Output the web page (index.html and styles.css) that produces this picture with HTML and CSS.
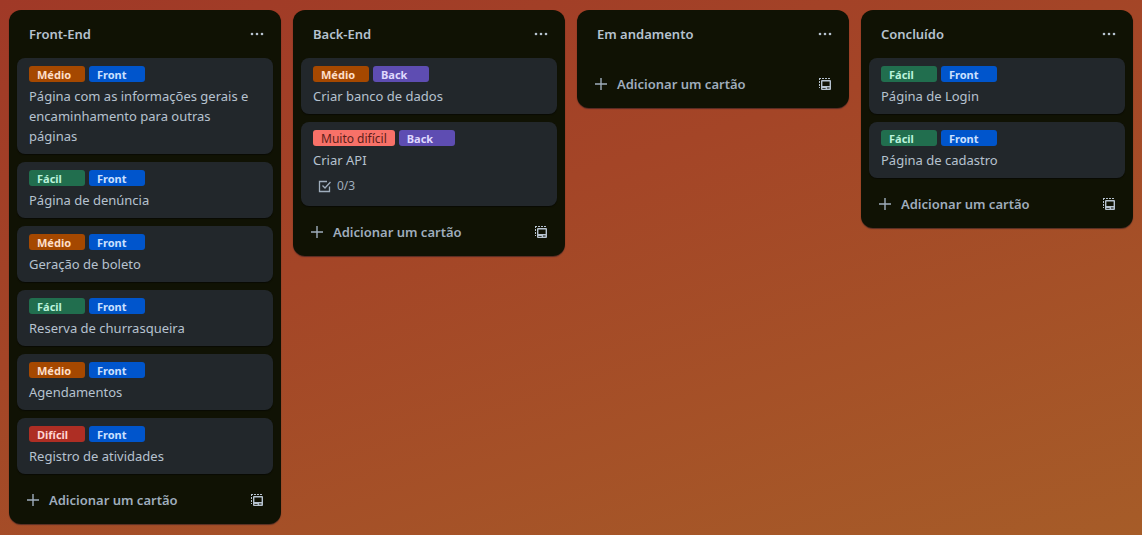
FILE: index.html
```html
<!DOCTYPE html>
<html lang="pt-BR">
<head>
<meta charset="utf-8">
<meta name="viewport" content="width=device-width, initial-scale=1">
<title>Quadro</title>
<link rel="stylesheet" href="styles.css">
</head>
<body>
<svg class="sprite" aria-hidden="true">
  <symbol id="dots" viewBox="0 0 16 16"><g fill="currentColor"><circle cx="3" cy="8" r="1.3"/><circle cx="8" cy="8" r="1.3"/><circle cx="13" cy="8" r="1.3"/></g></symbol>
  <symbol id="plus" viewBox="0 0 16 16"><path d="M8 2v12M2 8h12" fill="none" stroke="currentColor" stroke-width="1.4"/></symbol>
  <symbol id="template" viewBox="0 0 16 16"><path d="M2 2h2v1H3v1H2zM5 2h2v1H5zM8 2h2v1H8zM11 2h2v1h-2zM2 5h1v2H2zM2 8h1v2H2zM2 11h1v1H2z" fill="currentColor"/><path fill="currentColor" fill-rule="evenodd" d="M5 4h8a1 1 0 0 1 1 1v8a1 1 0 0 1-1 1H5a1 1 0 0 1-1-1V5a1 1 0 0 1 1-1zM5.400 5.400v4.600h7.200V5.400zM10 11.500v1h2.500v-1zM5.400 12v.800h3.200V12z"/></symbol>
  <symbol id="check" viewBox="0 0 16 16"><path d="M12.500 8.500v5h-10v-10h7.500M5.500 7.500l2.500 2.500 5.500-6" fill="none" stroke="currentColor" stroke-width="1.300"/></symbol>
</svg>
<main class="board">
  <section class="list">
    <header class="list-header"><h2 class="list-title">Front-End</h2><button class="icon-button" aria-label="Ações da lista"><svg class="icon"><use href="#dots"/></svg></button></header>
    <ul class="cards">
      <li class="card"><div class="labels"><span class="label orange">Médio</span><span class="label blue">Front</span></div><a class="card-title" href="#">Página com as informações gerais e encaminhamento para outras páginas</a></li>
      <li class="card"><div class="labels"><span class="label green">Fácil</span><span class="label blue">Front</span></div><a class="card-title" href="#">Página de denúncia</a></li>
      <li class="card"><div class="labels"><span class="label orange">Médio</span><span class="label blue">Front</span></div><a class="card-title" href="#">Geração de boleto</a></li>
      <li class="card"><div class="labels"><span class="label green">Fácil</span><span class="label blue">Front</span></div><a class="card-title" href="#">Reserva de churrasqueira</a></li>
      <li class="card"><div class="labels"><span class="label orange">Médio</span><span class="label blue">Front</span></div><a class="card-title" href="#">Agendamentos</a></li>
      <li class="card"><div class="labels"><span class="label red">Difícil</span><span class="label blue">Front</span></div><a class="card-title" href="#">Registro de atividades</a></li>
    </ul>
    <footer class="list-footer"><button class="add-card"><svg class="icon"><use href="#plus"/></svg>Adicionar um cartão</button><button class="icon-button" aria-label="Criar de um modelo"><svg class="icon"><use href="#template"/></svg></button></footer>
  </section>
  <section class="list">
    <header class="list-header"><h2 class="list-title">Back-End</h2><button class="icon-button" aria-label="Ações da lista"><svg class="icon"><use href="#dots"/></svg></button></header>
    <ul class="cards">
      <li class="card"><div class="labels"><span class="label orange">Médio</span><span class="label purple">Back</span></div><a class="card-title" href="#">Criar banco de dados</a></li>
      <li class="card"><div class="labels"><span class="label salmon">Muito difícil</span><span class="label purple">Back</span></div><a class="card-title" href="#">Criar API</a><div class="badge"><svg class="icon"><use href="#check"/></svg>0/3</div></li>
    </ul>
    <footer class="list-footer"><button class="add-card"><svg class="icon"><use href="#plus"/></svg>Adicionar um cartão</button><button class="icon-button" aria-label="Criar de um modelo"><svg class="icon"><use href="#template"/></svg></button></footer>
  </section>
  <section class="list">
    <header class="list-header"><h2 class="list-title">Em andamento</h2><button class="icon-button" aria-label="Ações da lista"><svg class="icon"><use href="#dots"/></svg></button></header>
    <footer class="list-footer"><button class="add-card"><svg class="icon"><use href="#plus"/></svg>Adicionar um cartão</button><button class="icon-button" aria-label="Criar de um modelo"><svg class="icon"><use href="#template"/></svg></button></footer>
  </section>
  <section class="list">
    <header class="list-header"><h2 class="list-title">Concluído</h2><button class="icon-button" aria-label="Ações da lista"><svg class="icon"><use href="#dots"/></svg></button></header>
    <ul class="cards">
      <li class="card"><div class="labels"><span class="label green">Fácil</span><span class="label blue">Front</span></div><a class="card-title" href="#">Página de Login</a></li>
      <li class="card"><div class="labels"><span class="label green">Fácil</span><span class="label blue">Front</span></div><a class="card-title" href="#">Página de cadastro</a></li>
    </ul>
    <footer class="list-footer"><button class="add-card"><svg class="icon"><use href="#plus"/></svg>Adicionar um cartão</button><button class="icon-button" aria-label="Criar de um modelo"><svg class="icon"><use href="#template"/></svg></button></footer>
  </section>
</main>
</body>
</html>
```
FILE: styles.css
```css
* { box-sizing: border-box; }

body {
  margin: 0;
  min-height: 100vh;
  background: linear-gradient(162deg, #a03927, #a44527 40%, #a65c28);
  color: #b6c2cf;
  font: 13px/20px "Noto Sans", "Open Sans", sans-serif;
}

.sprite { position: absolute; width: 0; height: 0; }

.board {
  display: grid;
  grid-template-columns: repeat(4, minmax(0, 1fr));
  align-items: start;
  gap: 12px;
  padding: 10px 9px;
}

.list {
  padding: 8px;
  border-radius: 12px;
  background: #101204;
  box-shadow: 0 1px 1px #09102180;
}

.list-header {
  display: flex;
  align-items: center;
  justify-content: space-between;
  height: 32px;
  margin-bottom: 8px;
  padding-left: 12px;
}

.list-title { margin: 0; font-size: 13px; line-height: 20px; font-weight: 600; }

.icon { width: 16px; height: 16px; flex: none; }

.icon-button {
  display: flex;
  align-items: center;
  justify-content: center;
  width: 32px;
  height: 32px;
  padding: 0;
  border: 0;
  background: none;
  color: #b6c2cf;
}

.cards {
  display: flex;
  flex-direction: column;
  gap: 8px;
  margin: 0;
  padding: 0;
  list-style: none;
}

.card {
  padding: 8px 12px;
  border-radius: 8px;
  background: #22272b;
  box-shadow: 0 1px 1px #03040480;
}

.labels { display: flex; gap: 4px; margin-bottom: 4px; }

.label {
  min-width: 56px;
  height: 16px;
  padding: 0 8px;
  border-radius: 3px;
  font-size: 11px;
  line-height: 17px;
  font-weight: 700;
}

.orange { background: #a54800; color: #fedec8; }
.blue { background: #0055cc; color: #cce0ff; }
.green { background: #216e4e; color: #baf3db; }
.red { background: #ae2e24; color: #ffd5d2; }
.purple { background: #5e4db2; color: #dfd8fd; }
.salmon { background: #f87168; color: #5d1f1a; font-size: 12px; font-weight: 400; }

.card-title { display: block; color: inherit; text-decoration: none; }

.badge {
  display: flex;
  align-items: center;
  gap: 4px;
  height: 24px;
  margin-top: 4px;
  padding-left: 4px;
  color: #9fadbc;
  font-size: 12px;
}

.list-footer { display: flex; align-items: center; justify-content: space-between; padding-top: 10px; }

.add-card {
  display: flex;
  align-items: center;
  gap: 8px;
  height: 32px;
  padding: 0 8px;
  border: 0;
  background: none;
  color: #9fadbc;
  font: inherit;
  font-weight: 600;
}
```
